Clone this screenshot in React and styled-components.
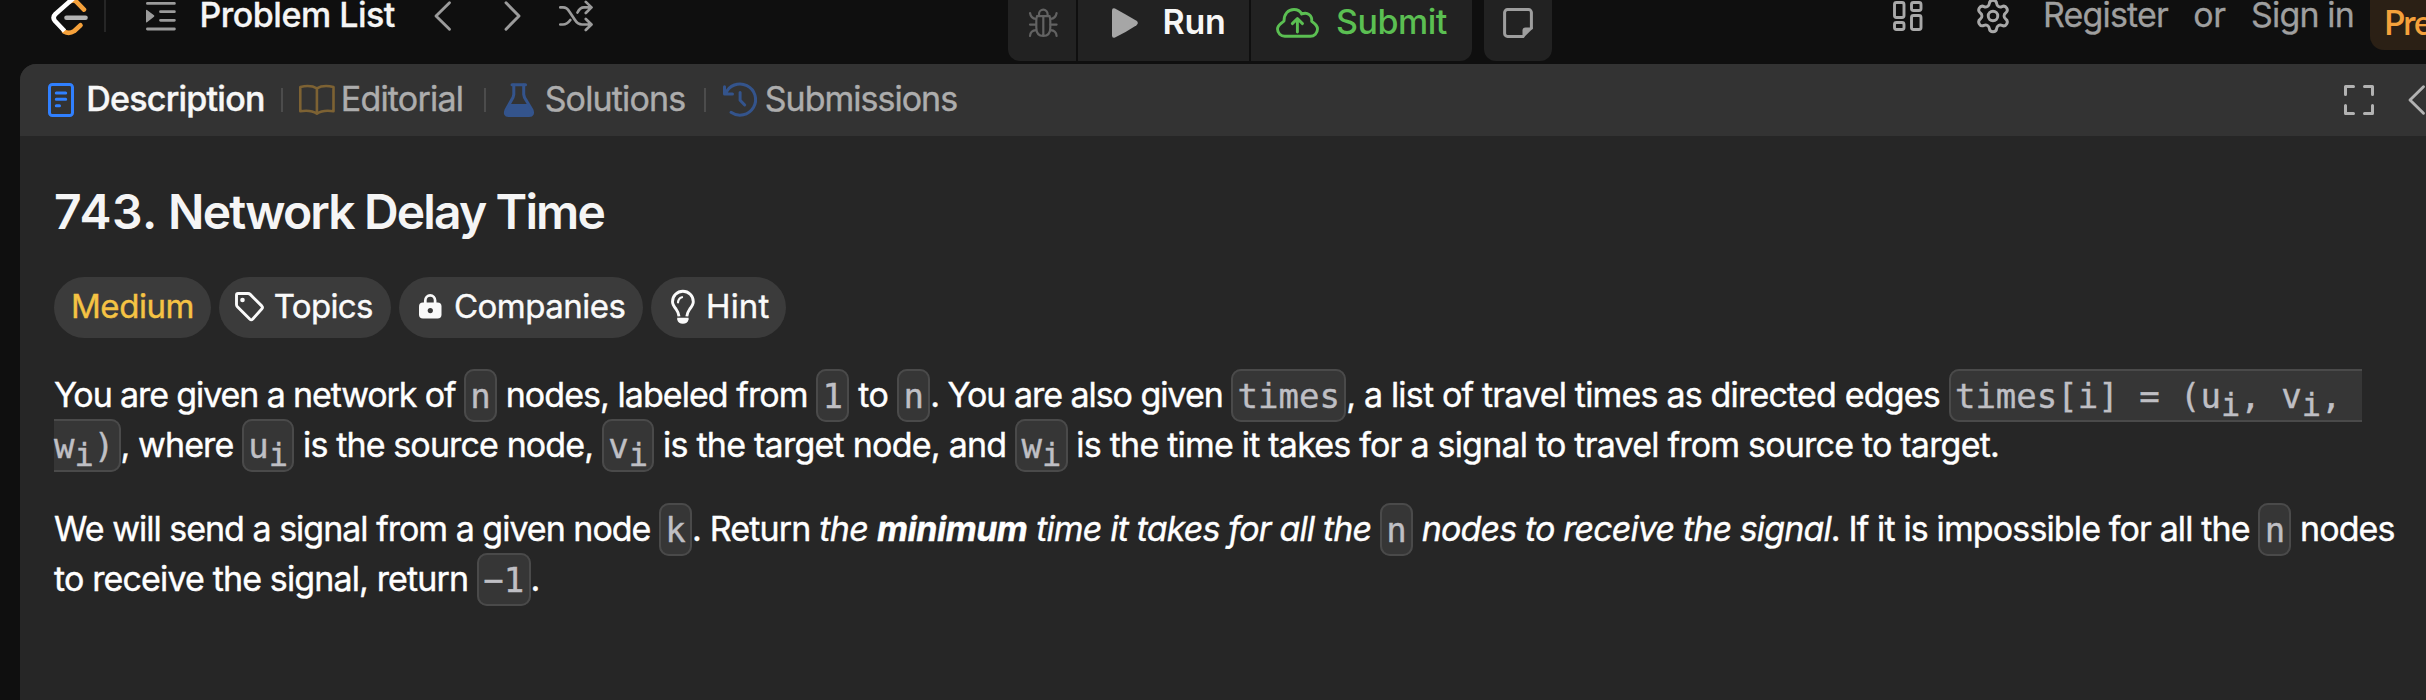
import React from "react";
import styled, { createGlobalStyle } from "styled-components";
import { Settings } from "lucide-react";

const GlobalStyle = createGlobalStyle`
  * { box-sizing: border-box; }
  body {
    margin: 0;
    background: #0f0f0f;
    color: #f5f5f5;
    font-family: Inter, "Liberation Sans", sans-serif;
    overflow: hidden;
  }
  svg { display: block; flex: none; overflow: visible; }
`;

const Page = styled.div`
  height: 700px;
  display: flex;
  flex-direction: column;
  overflow: hidden;
`;

/* ---------- top bar ---------- */

const TopBar = styled.header`
  height: 64px;
  flex: none;
  display: grid;
  grid-template-columns: 1008px 885px 1fr;
  align-items: start;
  overflow: hidden;
`;

const NavGroup = styled.div`
  display: flex;
  align-items: center;
  height: 32px;
  padding-left: ${(p) => p.$inset || 0}px;
`;

const BarIcon = styled.span`
  display: flex;
  color: ${(p) => p.$color || "#9b9b9b"};
  margin-left: ${(p) => p.$gap || 0}px;
`;

const BarText = styled.span`
  align-self: flex-start;
  line-height: 29px;
  font-size: 34px;
  white-space: nowrap;
  font-weight: ${(p) => (p.$strong ? 500 : 400)};
  color: ${(p) => (p.$strong ? "#f5f5f5" : "#9f9f9f")};
  margin-left: ${(p) => p.$gap || 0}px;
  letter-spacing: ${(p) => p.$track || 0}px;
  -webkit-text-stroke: 0.3px currentColor;
`;

const BarRule = styled.span`
  width: 2px;
  height: 32px;
  background: #262626;
  margin-left: 9px;
`;

const ActionGroup = styled.div`
  display: flex;
  gap: 2px;
  height: 61px;
`;

const ActionButton = styled.button`
  border: 0;
  padding: 0 0 15px ${(p) => p.$inset}px;
  width: ${(p) => p.$width}px;
  height: 61px;
  margin-left: ${(p) => (p.$apart ? 10 : 0)}px;
  display: flex;
  align-items: center;
  gap: ${(p) => p.$gap || 0}px;
  background: #222222;
  color: ${(p) => p.$color};
  border-radius: 0 0 ${(p) => (p.$roundRight ? "12px" : "0")} ${(p) => (p.$roundLeft ? "12px" : "0")};
  font: ${(p) => p.$weight || 500} 34px/44px Inter, "Liberation Sans", sans-serif;
  letter-spacing: ${(p) => p.$track || 0}px;
`;

const ActionLabel = styled.span`
  padding-bottom: 2px;
`;

const Premium = styled.div`
  align-self: flex-start;
  flex: 1;
  height: 50px;
  margin-left: 16px;
  padding-left: 14px;
  border-radius: 0 0 0 14px;
  background: #2b2015;
  color: #f5a13b;
  font: 600 34px/43px Lato, sans-serif;
  letter-spacing: -1.2px;
  overflow: hidden;
  white-space: nowrap;
`;

/* ---------- panel ---------- */

const Panel = styled.main`
  flex: 1;
  margin-left: 20px;
  background: #262626;
  border-top-left-radius: 16px;
  overflow: hidden;
`;

const TabBar = styled.nav`
  height: 72px;
  background: #333333;
  display: flex;
  align-items: center;
  padding-left: 28px;
`;

const Tab = styled.div`
  display: flex;
  align-items: center;
  gap: ${(p) => p.$gap}px;
  font-size: 34px;
  line-height: 41px;
  font-weight: ${(p) => (p.$active ? 500 : 400)};
  color: ${(p) => (p.$active ? "#f7f7f7" : "#adadad")};
  letter-spacing: ${(p) => p.$track}px;
  white-space: nowrap;
  -webkit-text-stroke: 0.4px currentColor;
`;

const TabLabel = styled.span`
  padding-bottom: 3px;
`;

const TabRule = styled.span`
  width: 2px;
  height: 24px;
  background: #4c4c4c;
  margin: 0 ${(p) => p.$after}px 0 ${(p) => p.$before}px;
`;

const PanelTools = styled.div`
  margin-left: auto;
  display: flex;
  align-items: center;
  gap: 34px;
  color: #b2b2b2;
`;

const Content = styled.section`
  padding: 47px 16px 0 34px;
`;

const Title = styled.h1`
  margin: 0;
  font-size: 48px;
  line-height: 58px;
  font-weight: 600;
  letter-spacing: -1.85px;
`;

const Number = styled.span`
  letter-spacing: 0.55px;
`;

const Chips = styled.div`
  display: flex;
  gap: 7.7px;
  margin-top: 36px;
`;

const Chip = styled.div`
  display: flex;
  align-items: center;
  gap: ${(p) => p.$gap || 0}px;
  width: ${(p) => p.$width}px;
  height: 61px;
  padding-left: ${(p) => p.$inset}px;
  border-radius: 31px;
  background: #3b3b3b;
  color: ${(p) => p.$color || "#fafafa"};
  font-size: 33px;
  line-height: 59px;
  padding-bottom: 2px;
  letter-spacing: ${(p) => p.$track}px;
  white-space: nowrap;
  -webkit-text-stroke: 0.4px currentColor;
`;

const Paragraph = styled.p`
  margin: ${(p) => p.$top}px 0 0;
  font-size: 34px;
  line-height: 50px;
  color: #ffffff;
  -webkit-text-stroke: 0.4px currentColor;
`;

const Run = styled.span`
  letter-spacing: ${(p) => p.$t}px;
`;

const Code = styled.code`
  font: normal 400 34px "DejaVu Sans Mono", monospace;
  line-height: 50px;
  letter-spacing: 0;
  white-space: pre-wrap;
  color: #bfbfc4;
  background: #363636;
  border: 2px solid #4a4a4a;
  border-radius: 10px;
  padding: 4.5px 4.3px 4.9px;
  sub {
    font-size: 32px;
    line-height: 0;
    vertical-align: -8px;
  }
`;

/* ---------- drawings ---------- */

const line = { fill: "none", stroke: "currentColor", strokeLinecap: "round", strokeLinejoin: "round" };

const Logo = () => (
  <svg width="50" height="32" {...line} strokeWidth="4.6">
    <path d="M25 1.500Q28.500 -1 31.500 1.800L39 9.600" stroke="#f5a13b" />
    <path d="M19 31.500Q24 34.500 29 31.200L35.500 25.300" stroke="#f5a13b" />
    <path d="M32 -5L10.500 14Q7 17.500 10 21L19.500 31" stroke="#ffffff" strokeLinecap="butt" />
    <path d="M21.500 17.800H40.500" stroke="#b3b3b3" />
  </svg>
);
const ListIcon = () => (
  <svg width="30" height="32" {...line} strokeWidth="2.8">
    <path d="M1.400 3.400H28.400M14.500 11.700H28.400M14.500 20.300H28.400M1.400 29H28.400" />
    <path d="M0 10.500Q0 9.300 1 10L8 15.300Q8.800 16 8 16.800L1 22.200Q0 23 0 21.800Z" fill="currentColor" stroke="none" />
  </svg>
);
const Chevron = ({ right, width = 18 }) => (
  <svg width={width} height="32" {...line} strokeWidth="2.9">
    <path d={right ? "M2 2.800L15 16L2 29.200" : "M15.500 2.800L2 16L15.500 29.200"} />
  </svg>
);
const Shuffle = () => (
  <svg width="34" height="32" {...line} strokeWidth="2.7">
    <path d="M1.300 7.400H4Q8 7.400 10.300 11.500L16 20Q18.800 24.500 23 24.500H32M1.300 24.500H4Q8 24.500 11.300 20M18.500 12.500Q21 7.400 25 7.400H32M26.800 1.900L32.500 7.400L26.800 13M26.800 19L32.500 24.500L26.800 30" />
  </svg>
);
const Bug = () => (
  <svg width="29" height="29" {...line} strokeWidth="2.2">
    <path d="M10 6.200V5A4.300 4.300 0 0 1 18.600 5V6.200M8 7.200H20.600M14.300 7.500V27M8 7.400Q7.300 9 7.300 12V18.500Q7.300 27 14.300 27Q21.300 27 21.300 18.500V12Q21.300 9 20.600 7.400" />
    <path d="M1 4Q1.800 9.300 7 10M27.600 4Q26.800 9.300 21.600 10M1 15.600H7M27.600 15.600H21.600M1 27Q1.500 21.500 7 21.200M27.600 27Q27.100 21.500 21.600 21.200" />
  </svg>
);
const Play = () => (
  <svg width="26" height="30" fill="#a6a6a6">
    <path d="M0 2.500Q0 -.6 3 .4Q15 7 24.500 12.800Q27.200 15 24.500 17.200Q15 23.500 3 29.600Q0 30.600 0 27.500Z" />
  </svg>
);
const Cloud = () => (
  <svg width="43" height="30" {...line} strokeWidth="2.9">
    <path d="M9 28.300A7.300 7.300 0 0 1 1.500 21C1.500 17.500 4.500 16.300 8 13C8 6 12 1.500 18 1.500C21.500 1.500 24.300 3.200 25.700 6C31.500 3.500 36.500 7.500 35.700 13.300C39.500 16.300 41.500 17.500 41.500 21A7.200 7.300 0 0 1 34.300 28.300Z" />
    <path d="M21.400 24V11M16.300 15.600L21.400 10.600L26.500 15.600" />
  </svg>
);
const Note = () => (
  <svg width="30" height="30" {...line} strokeWidth="3">
    <path d="M28.400 20V4.500A2.900 2.900 0 0 0 25.500 1.600H4.500A2.900 2.900 0 0 0 1.600 4.500V25.500A2.900 2.900 0 0 0 4.500 28.400H20" />
    <path d="M29.800 19.500H22.500A3 3 0 0 0 19.500 22.500V29.800H20.500L29.800 20.500Z" fill="currentColor" stroke="none" />
  </svg>
);
const Dashboard = () => (
  <svg width="30" height="32" {...line} strokeWidth="2.9">
    <rect x="1.500" y="2.500" width="9.500" height="15" rx="2" />
    <rect x="1.500" y="22.500" width="9.500" height="7" rx="2" />
    <rect x="18.500" y="2.500" width="9.500" height="8" rx="2" />
    <rect x="18.500" y="15.500" width="9.500" height="14" rx="2" />
  </svg>
);
const DocIcon = () => (
  <svg width="26" height="34" {...line} strokeWidth="3" stroke="#3080ff">
    <rect x="1.500" y="1.500" width="23" height="31" rx="2.800" />
    <path d="M8.300 10H17.700M8.300 16.300H17.700M8.300 22.800H11.500" />
  </svg>
);
const Book = () => (
  <svg width="36" height="30" {...line} strokeWidth="2.6" stroke="#7d6233">
    <path d="M17.900 3.300C13.500 .7 7 .7 1.300 1.900V26.200C7 25.300 13 25.300 17.900 28.600C22.800 25.300 28.800 25.300 34.500 26.200V1.900C28.800 .7 22.300 .7 17.900 3.300V28" />
  </svg>
);
const Flask = () => (
  <svg width="30" height="34" {...line} strokeWidth="3" stroke="#34548c">
    <path d="M8 1.700H21.500" />
    <path d="M9.800 2V11.500Q9.500 14.500 7.300 17.500L2 27Q0 32.400 4.500 32.400H25.300Q29.800 32.400 28 27L22.300 17.500Q20 14.500 19.700 11.500V2" />
    <path d="M6 21H23.500L28 28.500Q28.500 32 25 32.400H5Q1 32 1.900 28.500Z" fill="#34548c" stroke="none" />
  </svg>
);
const History = () => (
  <svg width="34" height="34" {...line} strokeWidth="3" stroke="#34548c">
    <path d="M2.500 10.800A15.600 15.600 0 1 1 8 29.300M1.500 3.700V11H9.500M17.100 9.500V17.200L21.700 22" />
  </svg>
);
const Expand = () => (
  <svg width="30" height="30" {...line} strokeWidth="3">
    <path d="M1.500 9.500V1.500H9.500M20.500 1.500H28.500V9.500M28.500 20.500V28.500H20.500M9.500 28.500H1.500V20.500" />
  </svg>
);
const Tag = () => (
  <svg width="30" height="30" {...line} strokeWidth="2.9">
    <path d="M3 1.500H13Q14.300 1.500 15.200 2.400L26.700 13.900Q28.200 15.500 26.700 17.100L17.800 27Q16.300 28.500 14.700 27L2.400 14.700Q1.500 13.800 1.500 12.500V3Q1.500 1.500 3 1.500Z" />
    <circle cx="7.500" cy="8" r="2.300" fill="currentColor" stroke="none" />
  </svg>
);
const Lock = () => (
  <svg width="23" height="25" {...line} strokeWidth="2.7">
    <path d="M6.300 9.500V6.500A4.900 5.200 0 0 1 16.100 6.500V9.500" />
    <rect x="0" y="8.500" width="22.500" height="16" rx="4" fill="currentColor" stroke="none" />
    <circle cx="11.300" cy="16.600" r="2.600" fill="#3b3b3b" stroke="none" />
  </svg>
);
const Bulb = () => (
  <svg width="24" height="34" {...line} strokeWidth="2.9">
    <path d="M8 26.300Q7.800 23 5 19Q1.500 14.500 1.500 11.700A10.400 10.400 0 0 1 22.300 11.700Q22.300 14.500 18.800 19Q16 23 15.800 26.300" strokeLinecap="butt" />
    <path d="M7 12.300Q7.300 8.300 11 7.200" strokeWidth="2.200" />
    <path d="M6.200 27.800H17.600V29.500Q16.500 33.800 11.900 33.800Q7.300 33.800 6.200 29.500Z" fill="currentColor" stroke="none" />
  </svg>
);

export default function App() {
  return (
    <Page>
      <GlobalStyle />
      <TopBar>
        <NavGroup $inset={45}>
          <Logo />
          <BarRule />
          <BarIcon $gap={40}><ListIcon /></BarIcon>
          <BarText $strong $gap={23.5} $track={-0.5}>Problem List</BarText>
          <BarIcon $gap={39}><Chevron /></BarIcon>
          <BarIcon $gap={52}><Chevron right /></BarIcon>
          <BarIcon $gap={37}><Shuffle /></BarIcon>
        </NavGroup>
        <ActionGroup>
          <ActionButton $width={68} $inset={21} $roundLeft $color="#626262"><Bug /></ActionButton>
          <ActionButton $width={171} $inset={34} $gap={24.5} $track={-0.3} $weight={600} $color="#f7f7f7">
            <Play /><ActionLabel>Run</ActionLabel>
          </ActionButton>
          <ActionButton $width={221} $inset={25} $gap={17} $track={-0.5} $roundRight $color="#5bbf52">
            <Cloud /><ActionLabel>Submit</ActionLabel>
          </ActionButton>
          <ActionButton $width={68} $inset={19} $roundLeft $roundRight $apart $color="#9e9e9e"><Note /></ActionButton>
        </ActionGroup>
        <NavGroup>
          <BarIcon $color="#a8a8a8"><Dashboard /></BarIcon>
          <BarIcon $gap={51} $color="#a8a8a8"><Settings size={38} strokeWidth={1.85} /></BarIcon>
          <BarText $gap={31} $track={-0.85}>Register</BarText>
          <BarText $gap={25.5} $track={-0.5}>or</BarText>
          <BarText $gap={25.5} $track={-0.85}>Sign in</BarText>
          <Premium>Premium</Premium>
        </NavGroup>
      </TopBar>

      <Panel>
        <TabBar>
          <Tab $active $gap={12.2} $track={-0.75}><DocIcon /><TabLabel>Description</TabLabel></Tab>
          <TabRule $before={16.6} $after={16} />
          <Tab $gap={5.5} $track={-0.8}><Book /><TabLabel>Editorial</TabLabel></Tab>
          <TabRule $before={20.5} $after={18} />
          <Tab $gap={11} $track={-0.85}><Flask /><TabLabel>Solutions</TabLabel></Tab>
          <TabRule $before={19} $after={16.5} />
          <Tab $gap={8} $track={-1}><History /><TabLabel>Submissions</TabLabel></Tab>
          <PanelTools>
            <Expand />
            <Chevron />
          </PanelTools>
        </TabBar>

        <Content>
          <Title><Number>743.</Number> Network Delay Time</Title>
          <Chips>
            <Chip $width={157} $inset={17} $track={-0.45} $color="#f5c344">Medium</Chip>
            <Chip $width={172.5} $inset={16.5} $gap={8.5} $track={-0.65}><Tag />Topics</Chip>
            <Chip $width={244.5} $inset={20.5} $gap={11.5} $track={-0.5}><Lock />Companies</Chip>
            <Chip $width={135} $inset={20} $gap={11} $track={0.1}><Bulb />Hint</Chip>
          </Chips>
          <Paragraph $top={32}>
            <Run $t={-1.115}>You are given a network of </Run><Code>n</Code>
            <Run $t={-0.949}> nodes, labeled from </Run><Code>1</Code>
            <Run $t={-0.578}> to </Run><Code>n</Code><Run $t={-1.039}>. You are also given </Run><Code>times</Code><Run $t={-0.82}>, a list of travel times as directed edges </Run><Code>times[i] = (u<sub>i</sub>, v<sub>i</sub>, w<sub>i</sub>)</Code><Run $t={-0.904}>, where </Run><Code>u<sub>i</sub></Code>
            <Run $t={-0.875}> is the source node, </Run><Code>v<sub>i</sub></Code>
            <Run $t={-0.757}> is the target node, and </Run><Code>w<sub>i</sub></Code>
            <Run $t={-0.788}> is the time it takes for a signal to travel from source to target.</Run>
          </Paragraph>
          <Paragraph $top={34}>
            <Run $t={-1.001}>We will send a signal from a given node </Run><Code>k</Code><Run $t={-0.85}>. Return </Run>
            <em><Run $t={-0.65}>the </Run><strong><Run $t={-0.5}>minimum</Run></strong><Run $t={-0.84}> time it takes for all the </Run><Code>n</Code><Run $t={-0.87}> nodes to receive the signal</Run></em><Run $t={-0.87}>. If it is impossible for all the </Run><Code>n</Code>
            <Run $t={-0.938}> nodes </Run><Run $t={-0.86}>to receive the signal, return </Run><Code>−1</Code><Run $t={0}>.</Run>
          </Paragraph>
        </Content>
      </Panel>
    </Page>
  );
}
